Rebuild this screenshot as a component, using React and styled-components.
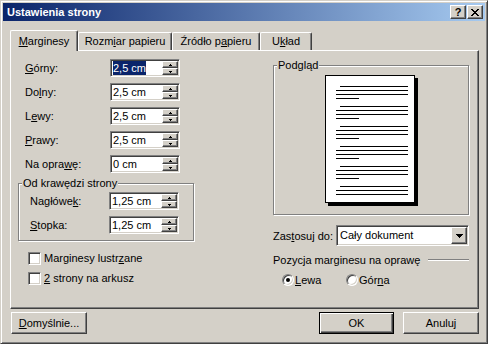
import React from 'react';
import styled, { createGlobalStyle, css } from 'styled-components';

const GlobalStyle = createGlobalStyle`
  html, body { margin: 0; padding: 0; background: #d4d0c8; }
  body {
    font-family: Tahoma, "Liberation Sans", Arial, sans-serif;
    font-size: 11px;
    color: #000;
  }
  * { box-sizing: border-box; }
`;

// classic 3D bevels
const raised = css`
  border: 1px solid;
  border-color: #fff #404040 #404040 #fff;
  box-shadow: inset -1px -1px 0 #808080;
  background: #d4d0c8;
`;

const sunken = css`
  border: 1px solid;
  border-color: #808080 #fff #fff #808080;
  box-shadow: inset 1px 1px 0 #404040, inset -1px -1px 0 #d4d0c8;
  padding: 1px;
  background: #fff;
`;

// turns rows of '#' into a crisp svg path
const pixelPath = (rows) =>
  rows
    .map((row, y) => {
      let d = '';
      let x = 0;
      while (x < row.length) {
        if (row[x] === '#') {
          let end = x;
          while (row[end] === '#') end++;
          d += `M${x} ${y}h${end - x}v1h-${end - x}z`;
          x = end;
        } else x++;
      }
      return d;
    })
    .join('');

const Pixels = ({ rows }) => (
  <svg width={rows[0].length} height={rows.length} shapeRendering="crispEdges">
    <path d={pixelPath(rows)} fill="#000" />
  </svg>
);

const CLOSE = ['##....##', '.##..##.', '..####..', '...##...', '..####..', '.##..##.', '##....##'];
const UP = ['.#.', '###'];
const DOWN = ['###', '.#.'];
const COMBO_DOWN = ['#######', '.#####.', '..###..', '...#...'];

const Window = styled.div`
  width: 488px;
  height: 344px;
  padding: 2px;
  background: #d4d0c8;
  border: 1px solid;
  border-color: #d4d0c8 #404040 #404040 #d4d0c8;
  box-shadow: inset 1px 1px 0 #fff, inset -1px -1px 0 #808080;
  display: flex;
  flex-direction: column;
`;

const TitleBar = styled.div`
  height: 18px;
  display: flex;
  align-items: center;
  padding: 0 2px 0 4px;
  background: linear-gradient(to right, #0a246a, #a6caf0);
  color: #fff;
  font-weight: bold;
`;

const TitleText = styled.span`
  flex: 1;
`;

const CaptionButton = styled.div`
  ${raised};
  width: 16px;
  height: 14px;
  margin-left: ${(p) => (p.$gap ? '1px' : '0')};
  display: flex;
  align-items: center;
  justify-content: center;
  color: #000;
  font-size: 11px;
  font-weight: bold;
  line-height: 12px;
`;

const Body = styled.div`
  padding: 0 6px 0 7px;
  display: flex;
  flex-direction: column;
`;

const TabStrip = styled.div`
  display: flex;
  align-items: flex-end;
  height: 20px;
  margin-top: 9px;
  position: relative;
  z-index: 1;
`;

const Tab = styled.div`
  width: ${(p) => p.$w}px;
  height: ${(p) => (p.$active ? 21 : 18)}px;
  margin-bottom: ${(p) => (p.$active ? -1 : 0)}px;
  padding-top: ${(p) => (p.$active ? 4 : 2)}px;
  line-height: 13px;
  text-align: center;
  white-space: nowrap;
  background: #d4d0c8;
  border-top: 1px solid #fff;
  border-left: 1px solid #fff;
  border-right: 1px solid #404040;
  box-shadow: inset -1px 0 0 #808080;
  border-radius: 2px 2px 0 0;
`;

const Panel = styled.div`
  height: 259px;
  padding: 5px 0 0 7px;
  border: 1px solid;
  border-color: #fff #404040 #404040 #fff;
  box-shadow: inset -1px -1px 0 #808080;
  display: grid;
  grid-template-columns: 176px 196px;
  column-gap: 79px;
  align-items: start;
`;

const Column = styled.div`
  display: flex;
  flex-direction: column;
`;

const FieldRow = styled.div`
  display: flex;
  align-items: center;
  height: 24px;
  padding-left: ${(p) => p.$indent}px;
`;

const Label = styled.span`
  width: ${(p) => p.$w}px;
  white-space: nowrap;
`;

const U = styled.span`
  text-decoration: underline;
  text-underline-offset: 1px;
`;

const SpinField = styled.div`
  ${sunken};
  width: 70px;
  height: 18px;
  display: flex;
`;

const SpinValue = styled.div`
  flex: 1;
  padding-left: 1px;
  line-height: 14px;
  white-space: nowrap;
`;

const Selected = styled.span`
  display: inline-block;
  background: #0a246a;
  color: #fff;
`;

const SpinButtons = styled.div`
  width: 16px;
  display: flex;
  flex-direction: column;
`;

const SpinButton = styled.div`
  ${raised};
  flex: 1;
  display: flex;
  align-items: center;
  justify-content: center;
`;

const GroupBox = styled.div`
  position: relative;
  width: ${(p) => p.$w}px;
  height: ${(p) => p.$h}px;
  margin-top: ${(p) => p.$top}px;
  padding-top: ${(p) => p.$pad || 0}px;
  border: 1px solid #808080;
  box-shadow: 1px 1px 0 #fff, inset 1px 1px 0 #fff;
  display: flex;
  flex-direction: column;
  justify-content: ${(p) => (p.$center ? 'center' : 'flex-start')};
  align-items: ${(p) => (p.$center ? 'center' : 'stretch')};
`;

const GroupCaption = styled.span`
  position: absolute;
  top: -7px;
  left: 3px;
  padding: 0 1px;
  line-height: 13px;
  background: #d4d0c8;
  white-space: nowrap;
`;

const CheckList = styled.div`
  margin-top: 7px;
  display: flex;
  flex-direction: column;
`;

const CheckRow = styled.label`
  display: flex;
  align-items: center;
  gap: 3px;
  height: 20px;
  padding-left: 10px;
`;

const CheckBox = styled.span`
  ${sunken};
  width: 13px;
  height: 13px;
`;

const ApplyRow = styled.div`
  display: flex;
  align-items: center;
  height: 21px;
  margin-top: 10px;
`;

const Combo = styled.div`
  ${sunken};
  flex: 1;
  height: 21px;
  display: flex;
`;

const ComboText = styled.div`
  flex: 1;
  padding-left: 2px;
  line-height: 17px;
`;

const ComboButton = styled.div`
  ${raised};
  width: 16px;
  display: flex;
  align-items: center;
  justify-content: center;
`;

const SectionRow = styled.div`
  display: flex;
  align-items: center;
  height: 14px;
  margin-top: 7px;
`;

const EtchedLine = styled.div`
  flex: 1;
  height: 2px;
  margin-left: 8px;
  border-top: 1px solid #808080;
  border-bottom: 1px solid #fff;
`;

const RadioRow = styled.div`
  display: flex;
  align-items: center;
  height: 16px;
  margin-top: 5px;
  padding-left: 9px;
`;

const RadioItem = styled.label`
  display: flex;
  align-items: center;
  gap: 1px;
  width: 64px;
`;

const Radio = styled.span`
  position: relative;
  width: 12px;
  height: 12px;
  border-radius: 50%;
  background: #fff;
  border: 1px solid;
  border-color: #808080 #fff #fff #808080;
  box-shadow: inset 1px 1px 0 #404040, inset -1px -1px 0 #d4d0c8;
  &::after {
    content: '';
    display: ${(p) => (p.$checked ? 'block' : 'none')};
    position: absolute;
    left: 3px;
    top: 3px;
    width: 4px;
    height: 4px;
    border-radius: 50%;
    background: #000;
  }
`;

const Footer = styled.div`
  display: flex;
  height: 22px;
  margin-top: 3px;
  padding-left: 1px;
`;

const Button = styled.button`
  ${raised};
  width: ${(p) => p.$w}px;
  height: 22px;
  margin-left: ${(p) => p.$ml || 0};
  padding: 0;
  font: inherit;
  color: #000;
  ${(p) =>
    p.$default &&
    css`
      border: 1px solid #000;
      box-shadow: inset 1px 1px 0 #fff, inset -1px -1px 0 #404040, inset -2px -2px 0 #808080;
    `}
`;

const PagePreview = () => {
  const lines = [];
  for (let p = 0; p < 6; p++) {
    const y = 11 + p * 20;
    lines.push(<rect key={`${p}a`} x="15" y={y} width="68" height="1" />);
    lines.push(<rect key={`${p}b`} x="11" y={y + 4} width="72" height="1" />);
    lines.push(<rect key={`${p}c`} x="11" y={y + 8} width="72" height="1" />);
    if (p < 5) lines.push(<rect key={`${p}d`} x="11" y={y + 12} width="23" height="1" />);
  }
  return (
    <svg width="93" height="131" shapeRendering="crispEdges">
      <rect x="3" y="3" width="90" height="128" fill="#000" />
      <rect x="0" y="0" width="90" height="128" fill="#000" />
      <rect x="1" y="1" width="88" height="126" fill="#fff" />
      <g fill="#000">{lines}</g>
    </svg>
  );
};

const Spinner = ({ children }) => (
  <SpinField>
    <SpinValue>{children}</SpinValue>
    <SpinButtons>
      <SpinButton>
        <Pixels rows={UP} />
      </SpinButton>
      <SpinButton>
        <Pixels rows={DOWN} />
      </SpinButton>
    </SpinButtons>
  </SpinField>
);

const margins = [
  { pre: '', key: 'G', post: 'órny:', value: '2,5 cm', selected: true },
  { pre: 'Do', key: 'l', post: 'ny:', value: '2,5 cm' },
  { pre: 'L', key: 'e', post: 'wy:', value: '2,5 cm' },
  { pre: '', key: 'P', post: 'rawy:', value: '2,5 cm' },
  { pre: 'Na opra', key: 'w', post: 'ę:', value: '0 cm' },
];

const edges = [
  { pre: 'Nagłówe', key: 'k', post: ':', value: '1,25 cm' },
  { pre: '', key: 'S', post: 'topka:', value: '1,25 cm' },
];

const App = () => (
  <>
    <GlobalStyle />
    <Window>
      <TitleBar>
        <TitleText>Ustawienia strony</TitleText>
        <CaptionButton>?</CaptionButton>
        <CaptionButton $gap>
          <Pixels rows={CLOSE} />
        </CaptionButton>
      </TitleBar>
      <Body>
        <TabStrip>
          <Tab $w={68} $active>
            <U>M</U>arginesy
          </Tab>
          <Tab $w={94}>
            Rozm<U>i</U>ar papieru
          </Tab>
          <Tab $w={88}>
            Źródło p<U>a</U>pieru
          </Tab>
          <Tab $w={52}>
            U<U>k</U>ład
          </Tab>
        </TabStrip>
        <Panel>
          <Column>
            {margins.map((m) => (
              <FieldRow key={m.post} $indent={7}>
                <Label $w={85}>
                  {m.pre}
                  <U>{m.key}</U>
                  {m.post}
                </Label>
                <Spinner>{m.selected ? <Selected>{m.value}</Selected> : m.value}</Spinner>
              </FieldRow>
            ))}
            <GroupBox $w={176} $h={58} $top={7} $pad={5}>
              <GroupCaption>Od krawędzi strony</GroupCaption>
              {edges.map((m) => (
                <FieldRow key={m.post} $indent={11}>
                  <Label $w={79}>
                    {m.pre}
                    <U>{m.key}</U>
                    {m.post}
                  </Label>
                  <Spinner>{m.value}</Spinner>
                </FieldRow>
              ))}
            </GroupBox>
            <CheckList>
              <CheckRow>
                <CheckBox />
                <span>
                  Marginesy lustr<U>z</U>ane
                </span>
              </CheckRow>
              <CheckRow>
                <CheckBox />
                <span>
                  <U>2</U> strony na arkusz
                </span>
              </CheckRow>
            </CheckList>
          </Column>
          <Column>
            <GroupBox $w={196} $h={150} $top={9} $center>
              <GroupCaption>Podgląd</GroupCaption>
              <PagePreview />
            </GroupBox>
            <ApplyRow>
              <Label $w={63}>
                Zas<U>t</U>osuj do:
              </Label>
              <Combo>
                <ComboText>Cały dokument</ComboText>
                <ComboButton>
                  <Pixels rows={COMBO_DOWN} />
                </ComboButton>
              </Combo>
            </ApplyRow>
            <SectionRow>
              <span>Pozycja marginesu na oprawę</span>
              <EtchedLine />
            </SectionRow>
            <RadioRow>
              <RadioItem>
                <Radio $checked />
                <span>
                  <U>L</U>ewa
                </span>
              </RadioItem>
              <RadioItem>
                <Radio />
                <span>
                  Gór<U>n</U>a
                </span>
              </RadioItem>
            </RadioRow>
          </Column>
        </Panel>
        <Footer>
          <Button $w={76}>
            <U>D</U>omyślnie...
          </Button>
          <Button $w={75} $ml="auto" $default>
            OK
          </Button>
          <Button $w={76} $ml="9px">
            Anuluj
          </Button>
        </Footer>
      </Body>
    </Window>
  </>
);

export default App;
